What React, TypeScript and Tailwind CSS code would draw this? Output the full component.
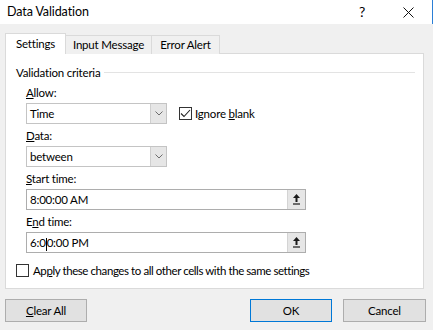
import React from 'react';

const font = { fontFamily: 'Lato, "Noto Sans", sans-serif' };

function Chevron() {
  return (
    <svg width="8" height="5" viewBox="0 0 8 5" className="text-[#6d6d6d]">
      <path d="M0.5 0.5 L4 4 L7.5 0.5" fill="none" stroke="currentColor" strokeWidth="1" />
    </svg>
  );
}

function SpinGlyph() {
  return (
    <svg width="7" height="11" viewBox="0 0 7 11">
      <path d="M3.5 0 L7 4 L4.5 4 L4.5 8 L2.5 8 L2.5 4 L0 4 Z" fill="#1a1a1a" />
      <rect x="0" y="9" width="7" height="2" fill="#6a6a6a" />
    </svg>
  );
}

function Combo({ value }: { value: string }) {
  return (
    <div className="flex h-[21px] w-[141px] border border-[#c4c4c4] bg-white">
      <div className="flex-1 pl-[3px] leading-[19px] text-black">{value}</div>
      <div className="flex w-[16px] items-center justify-center border-l border-[#cfcfcf] bg-[#e6e6e6]">
        <Chevron />
      </div>
    </div>
  );
}

function TimeInput({ children }: { children: React.ReactNode }) {
  return (
    <div className="flex h-[21px] w-[280px] border border-[#adadad] bg-white">
      <div className="flex-1 pl-[3px] leading-[19px] text-black">{children}</div>
      <div className="flex w-[18px] items-center justify-center border-l border-[#d4d4d4] bg-[#e6e6e6]">
        <SpinGlyph />
      </div>
    </div>
  );
}

function Label({ children }: { children: React.ReactNode }) {
  return <div className="mb-[2px] mt-[4px] h-[16px] leading-[16px]">{children}</div>;
}

function Check({ checked }: { checked?: boolean }) {
  return (
    <div className="flex h-[13px] w-[13px] items-center justify-center border border-[#333] bg-white">
      {checked && (
        <svg width="11" height="9" viewBox="0 0 11 9">
          <path d="M1 4.5 L4 7.5 L10 1" fill="none" stroke="#222" strokeWidth="1.1" />
        </svg>
      )}
    </div>
  );
}

export default function App() {
  return (
    <div className="flex h-[330px] w-[433px] flex-col bg-[#f0f0f0] text-[11.5px] tracking-[-0.2px] text-black" style={font}>
      {/* Title bar */}
      <div className="flex h-[24px] items-center border-r border-[#2b7fd6] bg-white">
        <span className="pl-[7px] text-[12.5px] tracking-[-0.1px]">Data Validation</span>
        <span className="ml-auto mr-[38px] text-[14px] leading-none">?</span>
        <svg width="11" height="11" viewBox="0 0 11 11" className="mr-[18px]">
          <path d="M0.5 0.5 L10.5 10.5 M10.5 0.5 L0.5 10.5" stroke="#111" strokeWidth="1" />
        </svg>
      </div>

      <div className="flex flex-1 flex-col pl-[5px] pr-[9px] pt-[9px]">
        {/* Tabs */}
        <div className="relative z-10 flex h-[21px] items-end">
          <div className="flex h-[21px] w-[61px] items-center justify-center border border-b-0 border-[#dadada] bg-white">
            Settings
          </div>
          <div className="flex h-[19px] w-[86px] items-center justify-center border border-l-0 border-b-0 border-[#dadada] bg-[#f0f0f0]">
            Input Message
          </div>
          <div className="flex h-[19px] w-[68px] items-center justify-center border border-l-0 border-b-0 border-[#dadada] bg-[#f0f0f0]">
            Error Alert
          </div>
        </div>

        {/* Panel */}
        <div className="-mt-px flex h-[236px] flex-col border border-[#dadada] bg-white pl-[10px] pr-[8px]">
          <div className="mt-[10px] flex h-[17px] items-center">
            <span>Validation criteria</span>
            <div className="ml-[4px] h-px flex-1 bg-[#e3e3e3]" />
          </div>

          <div className="pl-[10px]">
            <Label>
              <span className="underline">A</span>llow:
            </Label>
            <div className="flex items-center">
              <Combo value="Time" />
              <div className="ml-[12px] flex items-center">
                <Check checked />
                <span className="ml-[3px]">
                  Ignore <span className="underline">b</span>lank
                </span>
              </div>
            </div>

            <Label>
              <span className="underline">D</span>ata:
            </Label>
            <Combo value="between" />

            <Label>
              <span className="underline">S</span>tart time:
            </Label>
            <TimeInput>8:00:00 AM</TimeInput>

            <Label>
              E<span className="underline">n</span>d time:
            </Label>
            <TimeInput>
              6:0<span className="inline-block h-[13px] w-px bg-black align-middle" />0:00 PM
            </TimeInput>
          </div>

          <div className="mt-[9px] flex items-center">
            <Check />
            <span className="ml-[4px] tracking-[-0.42px]">
              Ap<span className="underline">p</span>ly these changes to all other cells with the same settings
            </span>
          </div>
        </div>

        {/* Buttons */}
        <div className="mt-[10px] flex items-center">
          <button className="h-[23px] w-[82px] border border-[#adadad] bg-[#e1e1e1]">
            <span className="underline">C</span>lear All
          </button>
          <button className="ml-auto h-[23px] w-[82px] border border-[#0078d7] bg-[#e1e1e1]">OK</button>
          <button className="ml-[11px] mr-[-2px] h-[23px] w-[83px] border border-[#adadad] bg-[#e1e1e1]">Cancel</button>
        </div>
      </div>
    </div>
  );
}
